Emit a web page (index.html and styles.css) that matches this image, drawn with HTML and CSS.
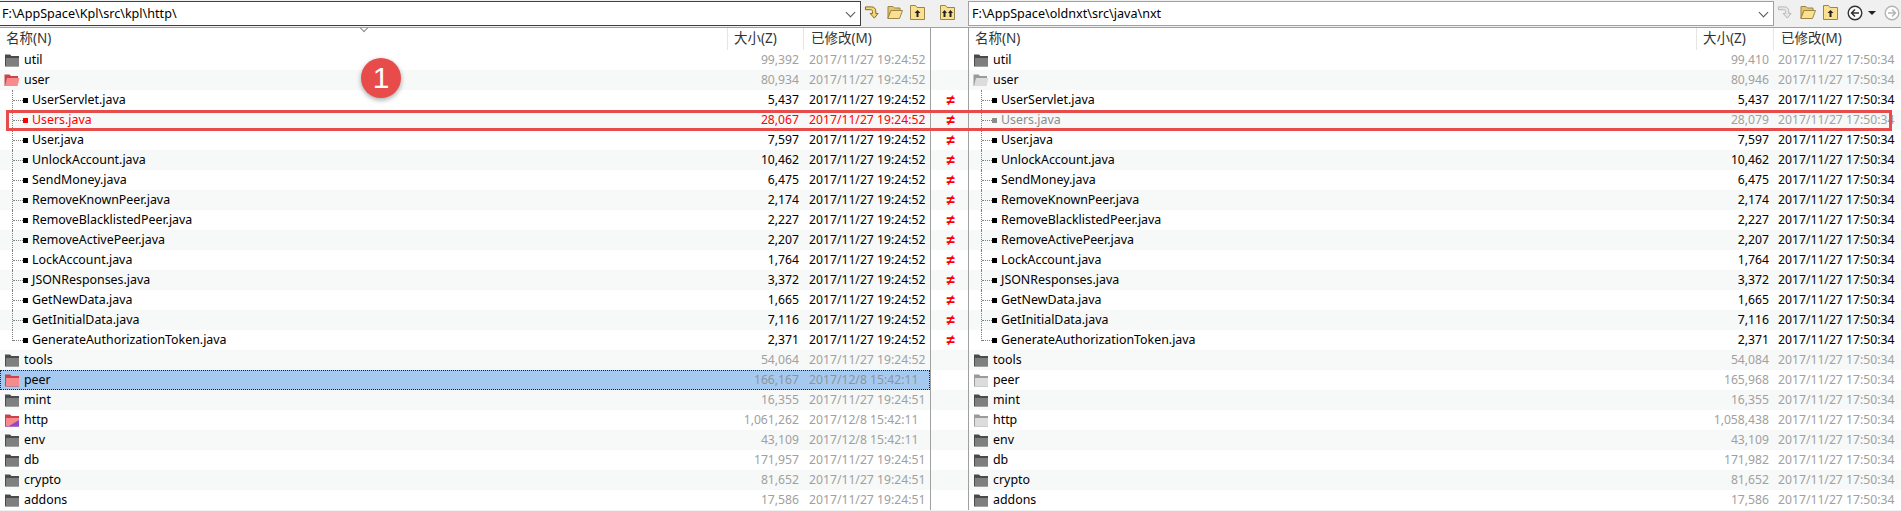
FILE: index.html
```html
<!DOCTYPE html>
<html lang="en">
<head>
  <meta charset="UTF-8">
  <meta name="viewport" content="width=device-width, initial-scale=1.0">
  <title>Folder Compare</title>
  <link rel="stylesheet" href="styles.css">
</head>
<body>
  <svg class="defs" width="0" height="0">
    <symbol id="closed" viewBox="0 0 16 14">
      <path class="back" d="M1 1.500h5l1.500 1.500H15v10.500H1z"/>
      <path class="front" d="M2 5h13v8H2z"/>
    </symbol>
    <symbol id="open" viewBox="0 0 16 14">
      <path class="back" d="M0.500 1.500h5L7 3h7v3H3.500L1.500 13H0.500z"/>
      <path class="front" d="M3 5h12.500L13.500 13H1z"/>
    </symbol>
    <symbol id="merged" viewBox="0 0 16 14">
      <path fill="#c8444c" d="M1 1.500h5L7.500 3H15v10.500H1z"/>
      <path fill="#f98a8c" d="M2 5h13v3.500L8 13H2z"/>
      <path fill="#8a4bd0" d="M15 7v6.500H1V13h4z"/>
    </symbol>
    <symbol id="sync" viewBox="0 0 16 16">
      <path d="M1 2h6.500c3 0 4.500 2 4.500 4.500V9h2.500L10.500 14 6 9h2.500V7c0-1.500-.8-2-2-2H1z" stroke-linejoin="round"/>
    </symbol>
    <symbol id="folder-open" viewBox="0 0 16 15">
      <path d="M1 1.500h5L7.500 3H13v2.500H4L1 13z" fill="#e8c465" stroke="#9a8648"/>
      <path d="M4 5.500h11.500L12.500 13.500H.800z" fill="#fbe08f" stroke="#9a8648"/>
    </symbol>
    <symbol id="folder-up" viewBox="0 0 15 15">
      <path d="M.500 .500h5l1.500 2h7.500v12H.500z" fill="#fbe08f" stroke="#9a8648"/>
      <path d="M7.500 5L4.500 8h2v4h2V8h2z" fill="#222"/>
    </symbol>
    <symbol id="folder-root" viewBox="0 0 15 15">
      <path d="M.500 .500h5l1.500 2h7.500v12H.500z" fill="#fbe08f" stroke="#9a8648"/>
      <path d="M4.500 5L2 8h1.500v4h2V8H7zM10.500 5L8 8h1.500v4h2V8H13z" fill="#222"/>
    </symbol>
  </svg>

  <div class="toolbar">
    <div class="address"><span>F:\AppSpace\Kpl\src\kpl\http\</span><span class="chevron"></span></div>
    <div class="tools tools-left">
      <svg class="tool sync"><use href="#sync"/></svg>
      <svg class="tool"><use href="#folder-open"/></svg>
      <svg class="tool tool-small"><use href="#folder-up"/></svg>
      <svg class="tool tool-small tool-gap"><use href="#folder-root"/></svg>
    </div>
    <div class="address address-right"><span>F:\AppSpace\oldnxt\src\java\nxt</span><span class="chevron"></span></div>
    <div class="tools tools-right">
      <svg class="tool sync sync-off"><use href="#sync"/></svg>
      <svg class="tool"><use href="#folder-open"/></svg>
      <svg class="tool tool-small"><use href="#folder-up"/></svg>
      <svg class="nav" viewBox="0 0 16 16"><circle cx="8" cy="8" r="6.800" fill="#fff" stroke="#333" stroke-width="1.400"/><path d="M12 8H5M8 4.500L4.500 8 8 11.500" fill="none" stroke="#333" stroke-width="1.500"/></svg>
      <span class="caret"></span>
      <svg class="nav nav-off" viewBox="0 0 16 16"><circle cx="8" cy="8" r="6.800" fill="#fff" stroke="#b4b4b4" stroke-width="1.400"/><path d="M4 8h7M8 4.500L11.500 8 8 11.500" fill="none" stroke="#b4b4b4" stroke-width="1.500"/></svg>
    </div>
  </div>
  <div class="strip"></div>

  <div class="panes">
    <div class="pane pane-left">
      <div class="head"><span class="head-name">名称(N)<i class="sort"></i></span><span class="head-size">大小(Z)</span><span class="head-date">已修改(M)</span></div>
      <div class="row muted"><span class="name"><svg class="folder gray"><use href="#closed"/></svg>util</span><span class="size">99,392</span><span class="date">2017/11/27 19:24:52</span></div>
      <div class="row muted"><span class="name"><svg class="folder red"><use href="#open"/></svg>user</span><span class="size">80,934</span><span class="date">2017/11/27 19:24:52</span></div>
      <div class="row file"><span class="name"><i class="twig"></i><i class="dot"></i>UserServlet.java</span><span class="size">5,437</span><span class="date">2017/11/27 19:24:52</span></div>
      <div class="row file changed"><span class="name"><i class="twig"></i><i class="dot"></i>Users.java</span><span class="size">28,067</span><span class="date">2017/11/27 19:24:52</span></div>
      <div class="row file"><span class="name"><i class="twig"></i><i class="dot"></i>User.java</span><span class="size">7,597</span><span class="date">2017/11/27 19:24:52</span></div>
      <div class="row file"><span class="name"><i class="twig"></i><i class="dot"></i>UnlockAccount.java</span><span class="size">10,462</span><span class="date">2017/11/27 19:24:52</span></div>
      <div class="row file"><span class="name"><i class="twig"></i><i class="dot"></i>SendMoney.java</span><span class="size">6,475</span><span class="date">2017/11/27 19:24:52</span></div>
      <div class="row file"><span class="name"><i class="twig"></i><i class="dot"></i>RemoveKnownPeer.java</span><span class="size">2,174</span><span class="date">2017/11/27 19:24:52</span></div>
      <div class="row file"><span class="name"><i class="twig"></i><i class="dot"></i>RemoveBlacklistedPeer.java</span><span class="size">2,227</span><span class="date">2017/11/27 19:24:52</span></div>
      <div class="row file"><span class="name"><i class="twig"></i><i class="dot"></i>RemoveActivePeer.java</span><span class="size">2,207</span><span class="date">2017/11/27 19:24:52</span></div>
      <div class="row file"><span class="name"><i class="twig"></i><i class="dot"></i>LockAccount.java</span><span class="size">1,764</span><span class="date">2017/11/27 19:24:52</span></div>
      <div class="row file"><span class="name"><i class="twig"></i><i class="dot"></i>JSONResponses.java</span><span class="size">3,372</span><span class="date">2017/11/27 19:24:52</span></div>
      <div class="row file"><span class="name"><i class="twig"></i><i class="dot"></i>GetNewData.java</span><span class="size">1,665</span><span class="date">2017/11/27 19:24:52</span></div>
      <div class="row file"><span class="name"><i class="twig"></i><i class="dot"></i>GetInitialData.java</span><span class="size">7,116</span><span class="date">2017/11/27 19:24:52</span></div>
      <div class="row file"><span class="name"><i class="twig twig-end"></i><i class="dot"></i>GenerateAuthorizationToken.java</span><span class="size">2,371</span><span class="date">2017/11/27 19:24:52</span></div>
      <div class="row muted"><span class="name"><svg class="folder gray"><use href="#closed"/></svg>tools</span><span class="size">54,064</span><span class="date">2017/11/27 19:24:52</span></div>
      <div class="row muted selected"><span class="name"><svg class="folder red"><use href="#closed"/></svg>peer</span><span class="size">166,167</span><span class="date">2017/12/8 15:42:11</span></div>
      <div class="row muted"><span class="name"><svg class="folder gray"><use href="#closed"/></svg>mint</span><span class="size">16,355</span><span class="date">2017/11/27 19:24:51</span></div>
      <div class="row muted"><span class="name"><svg class="folder"><use href="#merged"/></svg>http</span><span class="size">1,061,262</span><span class="date">2017/12/8 15:42:11</span></div>
      <div class="row muted"><span class="name"><svg class="folder gray"><use href="#closed"/></svg>env</span><span class="size">43,109</span><span class="date">2017/12/8 15:42:11</span></div>
      <div class="row muted"><span class="name"><svg class="folder gray"><use href="#closed"/></svg>db</span><span class="size">171,957</span><span class="date">2017/11/27 19:24:51</span></div>
      <div class="row muted"><span class="name"><svg class="folder gray"><use href="#closed"/></svg>crypto</span><span class="size">81,652</span><span class="date">2017/11/27 19:24:51</span></div>
      <div class="row muted"><span class="name"><svg class="folder gray"><use href="#closed"/></svg>addons</span><span class="size">17,586</span><span class="date">2017/11/27 19:24:51</span></div>
    </div>

    <div class="gutter">
      <div class="head"></div>
      <div class="mark"></div>
      <div class="mark"></div>
      <div class="mark">≠</div>
      <div class="mark">≠</div>
      <div class="mark">≠</div>
      <div class="mark">≠</div>
      <div class="mark">≠</div>
      <div class="mark">≠</div>
      <div class="mark">≠</div>
      <div class="mark">≠</div>
      <div class="mark">≠</div>
      <div class="mark">≠</div>
      <div class="mark">≠</div>
      <div class="mark">≠</div>
      <div class="mark">≠</div>
      <div class="mark"></div>
      <div class="mark"></div>
      <div class="mark"></div>
      <div class="mark"></div>
      <div class="mark"></div>
      <div class="mark"></div>
      <div class="mark"></div>
      <div class="mark"></div>
    </div>

    <div class="pane pane-right">
      <div class="head"><span class="head-name">名称(N)</span><span class="head-size">大小(Z)</span><span class="head-date">已修改(M)</span></div>
      <div class="row muted"><span class="name"><svg class="folder gray"><use href="#closed"/></svg>util</span><span class="size">99,410</span><span class="date">2017/11/27 17:50:34</span></div>
      <div class="row muted"><span class="name"><svg class="folder pale"><use href="#open"/></svg>user</span><span class="size">80,946</span><span class="date">2017/11/27 17:50:34</span></div>
      <div class="row file"><span class="name"><i class="twig"></i><i class="dot"></i>UserServlet.java</span><span class="size">5,437</span><span class="date">2017/11/27 17:50:34</span></div>
      <div class="row file faded"><span class="name"><i class="twig"></i><i class="dot"></i>Users.java</span><span class="size">28,079</span><span class="date">2017/11/27 17:50:34</span></div>
      <div class="row file"><span class="name"><i class="twig"></i><i class="dot"></i>User.java</span><span class="size">7,597</span><span class="date">2017/11/27 17:50:34</span></div>
      <div class="row file"><span class="name"><i class="twig"></i><i class="dot"></i>UnlockAccount.java</span><span class="size">10,462</span><span class="date">2017/11/27 17:50:34</span></div>
      <div class="row file"><span class="name"><i class="twig"></i><i class="dot"></i>SendMoney.java</span><span class="size">6,475</span><span class="date">2017/11/27 17:50:34</span></div>
      <div class="row file"><span class="name"><i class="twig"></i><i class="dot"></i>RemoveKnownPeer.java</span><span class="size">2,174</span><span class="date">2017/11/27 17:50:34</span></div>
      <div class="row file"><span class="name"><i class="twig"></i><i class="dot"></i>RemoveBlacklistedPeer.java</span><span class="size">2,227</span><span class="date">2017/11/27 17:50:34</span></div>
      <div class="row file"><span class="name"><i class="twig"></i><i class="dot"></i>RemoveActivePeer.java</span><span class="size">2,207</span><span class="date">2017/11/27 17:50:34</span></div>
      <div class="row file"><span class="name"><i class="twig"></i><i class="dot"></i>LockAccount.java</span><span class="size">1,764</span><span class="date">2017/11/27 17:50:34</span></div>
      <div class="row file"><span class="name"><i class="twig"></i><i class="dot"></i>JSONResponses.java</span><span class="size">3,372</span><span class="date">2017/11/27 17:50:34</span></div>
      <div class="row file"><span class="name"><i class="twig"></i><i class="dot"></i>GetNewData.java</span><span class="size">1,665</span><span class="date">2017/11/27 17:50:34</span></div>
      <div class="row file"><span class="name"><i class="twig"></i><i class="dot"></i>GetInitialData.java</span><span class="size">7,116</span><span class="date">2017/11/27 17:50:34</span></div>
      <div class="row file"><span class="name"><i class="twig twig-end"></i><i class="dot"></i>GenerateAuthorizationToken.java</span><span class="size">2,371</span><span class="date">2017/11/27 17:50:34</span></div>
      <div class="row muted"><span class="name"><svg class="folder gray"><use href="#closed"/></svg>tools</span><span class="size">54,084</span><span class="date">2017/11/27 17:50:34</span></div>
      <div class="row muted"><span class="name"><svg class="folder pale"><use href="#closed"/></svg>peer</span><span class="size">165,968</span><span class="date">2017/11/27 17:50:34</span></div>
      <div class="row muted"><span class="name"><svg class="folder gray"><use href="#closed"/></svg>mint</span><span class="size">16,355</span><span class="date">2017/11/27 17:50:34</span></div>
      <div class="row muted"><span class="name"><svg class="folder pale"><use href="#closed"/></svg>http</span><span class="size">1,058,438</span><span class="date">2017/11/27 17:50:34</span></div>
      <div class="row muted"><span class="name"><svg class="folder gray"><use href="#closed"/></svg>env</span><span class="size">43,109</span><span class="date">2017/11/27 17:50:34</span></div>
      <div class="row muted"><span class="name"><svg class="folder gray"><use href="#closed"/></svg>db</span><span class="size">171,982</span><span class="date">2017/11/27 17:50:34</span></div>
      <div class="row muted"><span class="name"><svg class="folder gray"><use href="#closed"/></svg>crypto</span><span class="size">81,652</span><span class="date">2017/11/27 17:50:34</span></div>
      <div class="row muted"><span class="name"><svg class="folder gray"><use href="#closed"/></svg>addons</span><span class="size">17,586</span><span class="date">2017/11/27 17:50:34</span></div>
    </div>
  </div>

  <div class="callout-box"></div>
  <div class="badge">1</div>
</body>
</html>
```

FILE: styles.css
```css
html, body {
  margin: 0;
  height: 511px;
  overflow: hidden;
}
body {
  position: relative;
  background-color: #fff;
  color: #000;
  font-family: "Noto Sans", "Noto Sans CJK SC", sans-serif;
  font-size: 12.200px;
}
.defs {
  position: absolute;
}

/* top bar */
.toolbar {
  display: flex;
  height: 26px;
  background-color: #f0f0f0;
}
.address {
  display: flex;
  flex: none;
  align-items: center;
  justify-content: space-between;
  box-sizing: border-box;
  width: 861px;
  height: 25px;
  margin-top: 1px;
  padding: 0 6px 0 2px;
  background-color: #fff;
  border: 1px solid #404040;
  border-left: none;
  font-size: 12.600px;
}
.address-right {
  width: 806px;
  padding-left: 3px;
  border-color: #a0a0a0;
  border-left: 1px solid #a0a0a0;
}
.chevron {
  width: 6px;
  height: 6px;
  margin-top: -3px;
  border-right: 1px solid #555;
  border-bottom: 1px solid #555;
  transform: rotate(45deg);
}
.tools {
  display: flex;
  flex: none;
  align-items: center;
  gap: 7px;
  height: 25px;
  padding-left: 3px;
}
.tools-left {
  width: 104px;
}
.tool {
  width: 16px;
  height: 15px;
}
.tool-small {
  width: 15px;
}
.tool-gap {
  margin-left: 8px;
}
.sync {
  fill: #f7d774;
  stroke: #7a6420;
}
.sync-off {
  fill: #e6e6e6;
  stroke: #b4b4b4;
}
.nav {
  width: 16px;
  height: 16px;
  margin-left: 2px;
}
.nav-off {
  margin-left: 1px;
}
.caret {
  margin-left: -2px;
  border-left: 4px solid transparent;
  border-right: 4px solid transparent;
  border-top: 4px solid #222;
}
.strip {
  height: 2px;
  background-color: #f0f0f0;
  border-bottom: 1px solid #a0a0a0;
  box-sizing: border-box;
}

/* panes */
.panes {
  display: flex;
  border-bottom: 1px solid #f0f0f0;
}
.pane-left {
  --name: 727px;
  --size: 76px;
  --date: 127px;
  --date-pad: 6px;
  width: 930px;
}
.pane-right {
  --name: 727px;
  --size: 77px;
  --date: 128px;
  --date-pad: 5px;
  width: 932px;
}
.head {
  display: grid;
  grid-template-columns: var(--name) var(--size) var(--date);
  height: 22px;
  line-height: 21px;
  color: #333;
  font-size: 13.500px;
}
.head > span {
  position: relative;
  padding-left: 6px;
  border-left: 1px solid #e5e5e5;
}
.head > .head-name {
  border-left: none;
}
.head > .head-date {
  padding-left: 7px;
}
.sort {
  position: absolute;
  left: 361px;
  top: -3px;
  width: 5px;
  height: 5px;
  border-right: 1px solid #888;
  border-bottom: 1px solid #888;
  transform: rotate(45deg);
}
.row {
  display: grid;
  grid-template-columns: var(--name) var(--size) var(--date);
  height: 20px;
  line-height: 20px;
  white-space: nowrap;
}
.row:nth-of-type(odd) {
  background-color: #f7f9f9;
}
.name {
  display: flex;
  align-items: center;
  font-size: 12.400px;
}
.size {
  padding-right: 4px;
  text-align: right;
}
.date {
  padding-left: var(--date-pad);
}
.muted .size,
.muted .date {
  color: #a0a0a0;
}
.folder {
  flex: none;
  width: 16px;
  height: 14px;
  margin: 0 4px;
}
.gray { --back: #4a4a4a; --front: #7f7f7f; }
.red { --back: #c8444c; --front: #f98a8c; }
.pale { --back: #9a9a9a; --front: #dcdcdc; }
.back { fill: var(--back); }
.front { fill: var(--front); }
.twig {
  position: relative;
  align-self: stretch;
  width: 11px;
  margin-left: 12px;
  border-left: 1px dotted #808080;
  box-sizing: border-box;
}
.twig::after {
  content: "";
  position: absolute;
  left: 0;
  top: 10px;
  width: 10px;
  border-top: 1px dotted #808080;
}
.twig-end {
  align-self: flex-start;
  height: 11px;
}
.dot {
  width: 5px;
  height: 5px;
  margin-right: 4px;
  background-color: #000;
}
.changed {
  color: #f00;
}
.changed .dot {
  background-color: #f00;
}
.faded .name {
  color: #8c8c8c;
}
.faded .dot {
  background-color: #8c8c8c;
}
.faded .size,
.faded .date {
  color: #a0a0a0;
}
.row.selected {
  background-color: #a6caef;
  outline: 1px dotted #222;
  outline-offset: -1px;
}
.selected .size,
.selected .date {
  color: #8d949c;
}

/* middle column */
.gutter {
  width: 37px;
  border-left: 1px solid #a0a0a0;
  border-right: 1px solid #a0a0a0;
}
.mark {
  box-sizing: border-box;
  height: 20px;
  padding-left: 2px;
  line-height: 20px;
  color: #f00;
  font-family: "Liberation Sans", sans-serif;
  font-size: 15px;
  font-weight: 700;
  text-align: center;
}
.mark:nth-of-type(odd) {
  background-color: #f7f9f9;
}

/* annotation drawn over the screenshot */
.callout-box {
  position: absolute;
  left: 6px;
  top: 110px;
  width: 1880px;
  height: 15px;
  border: 3px solid #e84c4a;
}
.badge {
  position: absolute;
  left: 361px;
  top: 58px;
  width: 40px;
  height: 40px;
  border-radius: 50%;
  background-color: #e84c4a;
  box-shadow: 0 2px 5px rgba(0, 0, 0, 0.35);
  color: #fff;
  font-family: "Liberation Sans", sans-serif;
  font-size: 30px;
  line-height: 40px;
  text-align: center;
}
```
